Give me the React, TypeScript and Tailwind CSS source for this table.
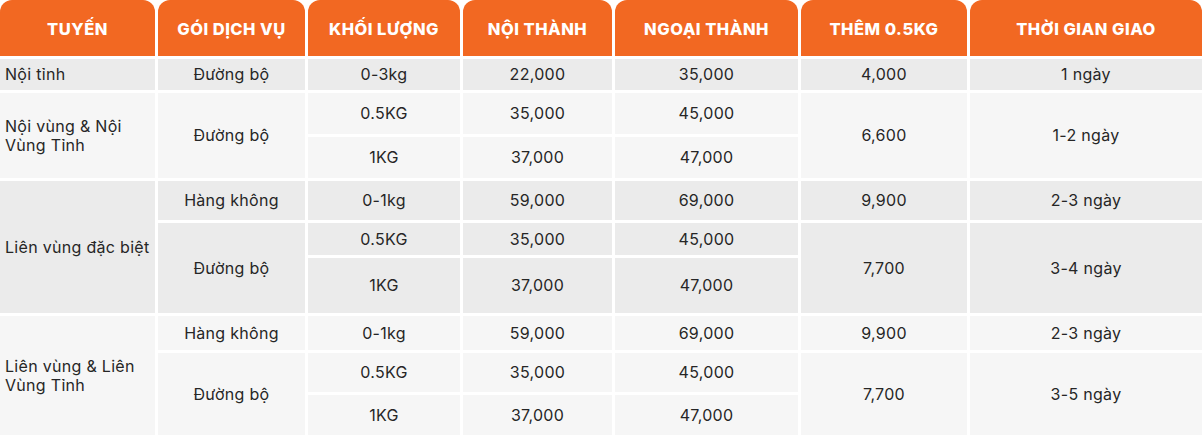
const headers = [
  "Tuyến",
  "Gói dịch vụ",
  "Khối lượng",
  "Nội thành",
  "Ngoại thành",
  "Thêm 0.5kg",
  "Thời gian giao",
];

type Cell = {
  text: React.ReactNode;
  row: string;
  col: string;
  tone: "gray" | "light";
  left?: boolean;
};

// grid rows: 1 = header, 2..10 = body sub-rows
const cells: Cell[] = [
  // Nội tỉnh
  { text: "Nội tỉnh", row: "row-start-2", col: "col-start-1", tone: "gray", left: true },
  { text: "Đường bộ", row: "row-start-2", col: "col-start-2", tone: "gray" },
  { text: "0-3kg", row: "row-start-2", col: "col-start-3", tone: "gray" },
  { text: "22,000", row: "row-start-2", col: "col-start-4", tone: "gray" },
  { text: "35,000", row: "row-start-2", col: "col-start-5", tone: "gray" },
  { text: "4,000", row: "row-start-2", col: "col-start-6", tone: "gray" },
  { text: "1 ngày", row: "row-start-2", col: "col-start-7", tone: "gray" },

  // Nội vùng
  { text: <>Nội vùng &amp; Nội<br />Vùng Tỉnh</>, row: "row-start-3 row-span-2", col: "col-start-1", tone: "light", left: true },
  { text: "Đường bộ", row: "row-start-3 row-span-2", col: "col-start-2", tone: "light" },
  { text: "0.5KG", row: "row-start-3", col: "col-start-3", tone: "light" },
  { text: "35,000", row: "row-start-3", col: "col-start-4", tone: "light" },
  { text: "45,000", row: "row-start-3", col: "col-start-5", tone: "light" },
  { text: "1KG", row: "row-start-4", col: "col-start-3", tone: "light" },
  { text: "37,000", row: "row-start-4", col: "col-start-4", tone: "light" },
  { text: "47,000", row: "row-start-4", col: "col-start-5", tone: "light" },
  { text: "6,600", row: "row-start-3 row-span-2", col: "col-start-6", tone: "light" },
  { text: "1-2 ngày", row: "row-start-3 row-span-2", col: "col-start-7", tone: "light" },

  // Liên vùng đặc biệt
  { text: "Liên vùng đặc biệt", row: "row-start-5 row-span-3", col: "col-start-1", tone: "gray", left: true },
  { text: "Hàng không", row: "row-start-5", col: "col-start-2", tone: "gray" },
  { text: "0-1kg", row: "row-start-5", col: "col-start-3", tone: "gray" },
  { text: "59,000", row: "row-start-5", col: "col-start-4", tone: "gray" },
  { text: "69,000", row: "row-start-5", col: "col-start-5", tone: "gray" },
  { text: "9,900", row: "row-start-5", col: "col-start-6", tone: "gray" },
  { text: "2-3 ngày", row: "row-start-5", col: "col-start-7", tone: "gray" },
  { text: "Đường bộ", row: "row-start-6 row-span-2", col: "col-start-2", tone: "gray" },
  { text: "0.5KG", row: "row-start-6", col: "col-start-3", tone: "gray" },
  { text: "35,000", row: "row-start-6", col: "col-start-4", tone: "gray" },
  { text: "45,000", row: "row-start-6", col: "col-start-5", tone: "gray" },
  { text: "1KG", row: "row-start-7", col: "col-start-3", tone: "gray" },
  { text: "37,000", row: "row-start-7", col: "col-start-4", tone: "gray" },
  { text: "47,000", row: "row-start-7", col: "col-start-5", tone: "gray" },
  { text: "7,700", row: "row-start-6 row-span-2", col: "col-start-6", tone: "gray" },
  { text: "3-4 ngày", row: "row-start-6 row-span-2", col: "col-start-7", tone: "gray" },

  // Liên vùng & Liên Vùng Tỉnh
  { text: <>Liên vùng &amp; Liên<br />Vùng Tỉnh</>, row: "row-start-8 row-span-3", col: "col-start-1", tone: "light", left: true },
  { text: "Hàng không", row: "row-start-8", col: "col-start-2", tone: "light" },
  { text: "0-1kg", row: "row-start-8", col: "col-start-3", tone: "light" },
  { text: "59,000", row: "row-start-8", col: "col-start-4", tone: "light" },
  { text: "69,000", row: "row-start-8", col: "col-start-5", tone: "light" },
  { text: "9,900", row: "row-start-8", col: "col-start-6", tone: "light" },
  { text: "2-3 ngày", row: "row-start-8", col: "col-start-7", tone: "light" },
  { text: "Đường bộ", row: "row-start-9 row-span-2", col: "col-start-2", tone: "light" },
  { text: "0.5KG", row: "row-start-9", col: "col-start-3", tone: "light" },
  { text: "35,000", row: "row-start-9", col: "col-start-4", tone: "light" },
  { text: "45,000", row: "row-start-9", col: "col-start-5", tone: "light" },
  { text: "1KG", row: "row-start-10", col: "col-start-3", tone: "light" },
  { text: "37,000", row: "row-start-10", col: "col-start-4", tone: "light" },
  { text: "47,000", row: "row-start-10", col: "col-start-5", tone: "light" },
  { text: "7,700", row: "row-start-9 row-span-2", col: "col-start-6", tone: "light" },
  { text: "3-5 ngày", row: "row-start-9 row-span-2", col: "col-start-7", tone: "light" },
];

export default function App() {
  return (
    <div className="w-[1202px] h-[435px] overflow-hidden bg-white font-['Inter','Noto_Sans',sans-serif] text-[16px] tracking-[0.3px] text-[#262626]">
      <div className="grid grid-cols-[155px_147px_152px_149px_183px_166px_232px] grid-rows-[56px_31px_41px_41px_39px_32px_55px_34px_39px_40px] gap-[3px]">
        {headers.map((h) => (
          <div
            key={h}
            className="row-start-1 flex items-center justify-center rounded-t-xl bg-[#f26822] pt-[3px] text-[16.5px] font-extrabold uppercase tracking-[0.5px] text-white"
          >
            {h}
          </div>
        ))}
        {cells.map((c, i) => (
          <div
            key={i}
            className={`${c.row} ${c.col} flex items-center leading-[19px] ${
              c.tone === "gray" ? "bg-[#ebebeb]" : "bg-[#f6f6f6]"
            } ${c.left ? "justify-start pl-[5px]" : "justify-center text-center"}`}
          >
            <span>{c.text}</span>
          </div>
        ))}
      </div>
    </div>
  );
}
